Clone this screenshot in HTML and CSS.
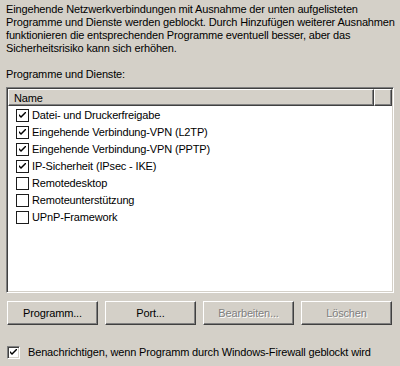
FILE: index.html
```html
<!DOCTYPE html>
<html lang="de">
<head>
<meta charset="utf-8">
<link rel="stylesheet" href="styles.css">
</head>
<body>
<div class="page">
  <p class="intro">Eingehende Netzwerkverbindungen mit Ausnahme der unten aufgelisteten Programme und Dienste werden geblockt. Durch Hinzufügen weiterer Ausnahmen funktionieren die entsprechenden Programme eventuell besser, aber das Sicherheitsrisiko kann sich erhöhen.</p>
  <div class="label">Programme und Dienste:</div>
  <div class="list">
    <div class="header">
      <div class="col col-name">Name</div>
      <div class="col col-rest"></div>
    </div>
    <ul class="rows">
      <li class="row"><span class="box checked"><svg viewBox="0 0 7 7" width="7" height="7"><path d="M0 2 L0 4 L2 6 L7 1 L7 -1 L2 4 Z" fill="#000"/></svg></span>Datei- und Druckerfreigabe</li>
      <li class="row"><span class="box checked"><svg viewBox="0 0 7 7" width="7" height="7"><path d="M0 2 L0 4 L2 6 L7 1 L7 -1 L2 4 Z" fill="#000"/></svg></span>Eingehende Verbindung-VPN (L2TP)</li>
      <li class="row"><span class="box checked"><svg viewBox="0 0 7 7" width="7" height="7"><path d="M0 2 L0 4 L2 6 L7 1 L7 -1 L2 4 Z" fill="#000"/></svg></span>Eingehende Verbindung-VPN (PPTP)</li>
      <li class="row"><span class="box checked"><svg viewBox="0 0 7 7" width="7" height="7"><path d="M0 2 L0 4 L2 6 L7 1 L7 -1 L2 4 Z" fill="#000"/></svg></span>IP-Sicherheit (IPsec - IKE)</li>
      <li class="row"><span class="box"></span>Remotedesktop</li>
      <li class="row"><span class="box"></span>Remoteunterstützung</li>
      <li class="row"><span class="box"></span>UPnP-Framework</li>
    </ul>
  </div>
  <div class="buttons">
    <button class="btn">Programm...</button>
    <button class="btn">Port...</button>
    <button class="btn" disabled>Bearbeiten...</button>
    <button class="btn" disabled>Löschen</button>
  </div>
  <div class="notify"><span class="box box-3d checked"><svg viewBox="0 0 7 7" width="7" height="7"><path d="M0 2 L0 4 L2 6 L7 1 L7 -1 L2 4 Z" fill="#000"/></svg></span>Benachrichtigen, wenn Programm durch Windows-Firewall geblockt wird</div>
</div>
</body>
</html>
```
FILE: styles.css
```css
html, body {
  margin: 0;
  padding: 0;
  background: #d4d0c8;
}
body {
  width: 400px;
  height: 366px;
  overflow: hidden;
  font-family: "Liberation Sans", Arial, sans-serif;
  font-size: 11px;
  line-height: 13px;
  letter-spacing: -0.15px;
  color: #000;
}
.page {
  padding: 3px 7px 0 6px;
}
.intro {
  margin: 0;
  width: 393px;
}
.label {
  margin-top: 13px;
  height: 13px;
}
.list {
  margin-top: 6px;
  height: 202px;
  background: #fff;
  border-top: 1px solid #808080;
  border-left: 1px solid #808080;
  border-right: 1px solid #fff;
  border-bottom: 1px solid #fff;
  box-shadow: inset 1px 1px 0 #404040, inset -1px -1px 0 #d4d0c8;
  padding: 1px;
  width: 384px;
}
.header {
  display: flex;
  height: 17px;
  background: #d4d0c8;
}
.col {
  box-sizing: border-box;
  height: 17px;
  border-top: 1px solid #fff;
  border-left: 1px solid #fff;
  border-right: 1px solid #404040;
  border-bottom: 1px solid #404040;
  box-shadow: inset -1px -1px 0 #808080;
}
.col-name {
  width: 366px;
  padding: 2px 0 0 5px;
  line-height: 13px;
}
.col-rest {
  flex: 1;
}
.rows {
  list-style: none;
  margin: 0;
  padding: 1px 0 0 0;
}
.row {
  display: flex;
  align-items: center;
  height: 17px;
  padding-left: 8px;
  white-space: nowrap;
}
.box {
  box-sizing: border-box;
  width: 13px;
  height: 13px;
  margin-right: 3px;
  background: #fff;
  border: 1px solid #1c1c1c;
  display: inline-flex;
  align-items: center;
  justify-content: center;
  flex: none;
}
.box-3d {
  border-top-color: #808080;
  border-left-color: #808080;
  border-right-color: #fff;
  border-bottom-color: #fff;
  box-shadow: inset 1px 1px 0 #404040, inset -1px -1px 0 #d4d0c8;
}
.buttons {
  display: flex;
  gap: 7px;
  margin-top: 8px;
  padding-left: 1px;
}
.btn {
  box-sizing: border-box;
  width: 91px;
  height: 24px;
  margin: 0;
  padding: 0;
  font-family: inherit;
  font-size: 11px;
  letter-spacing: -0.15px;
  color: #000;
  background: #d4d0c8;
  border-top: 1px solid #fff;
  border-left: 1px solid #fff;
  border-right: 1px solid #404040;
  border-bottom: 1px solid #404040;
  box-shadow: inset -1px -1px 0 #808080;
}
.btn:disabled {
  color: #808080;
  text-shadow: 1px 1px 0 #fff;
}
.notify {
  display: flex;
  align-items: center;
  margin-top: 20px;
  padding-left: 1px;
  height: 14px;
  white-space: nowrap;
}
.notify .box {
  margin-right: 8px;
}
```
